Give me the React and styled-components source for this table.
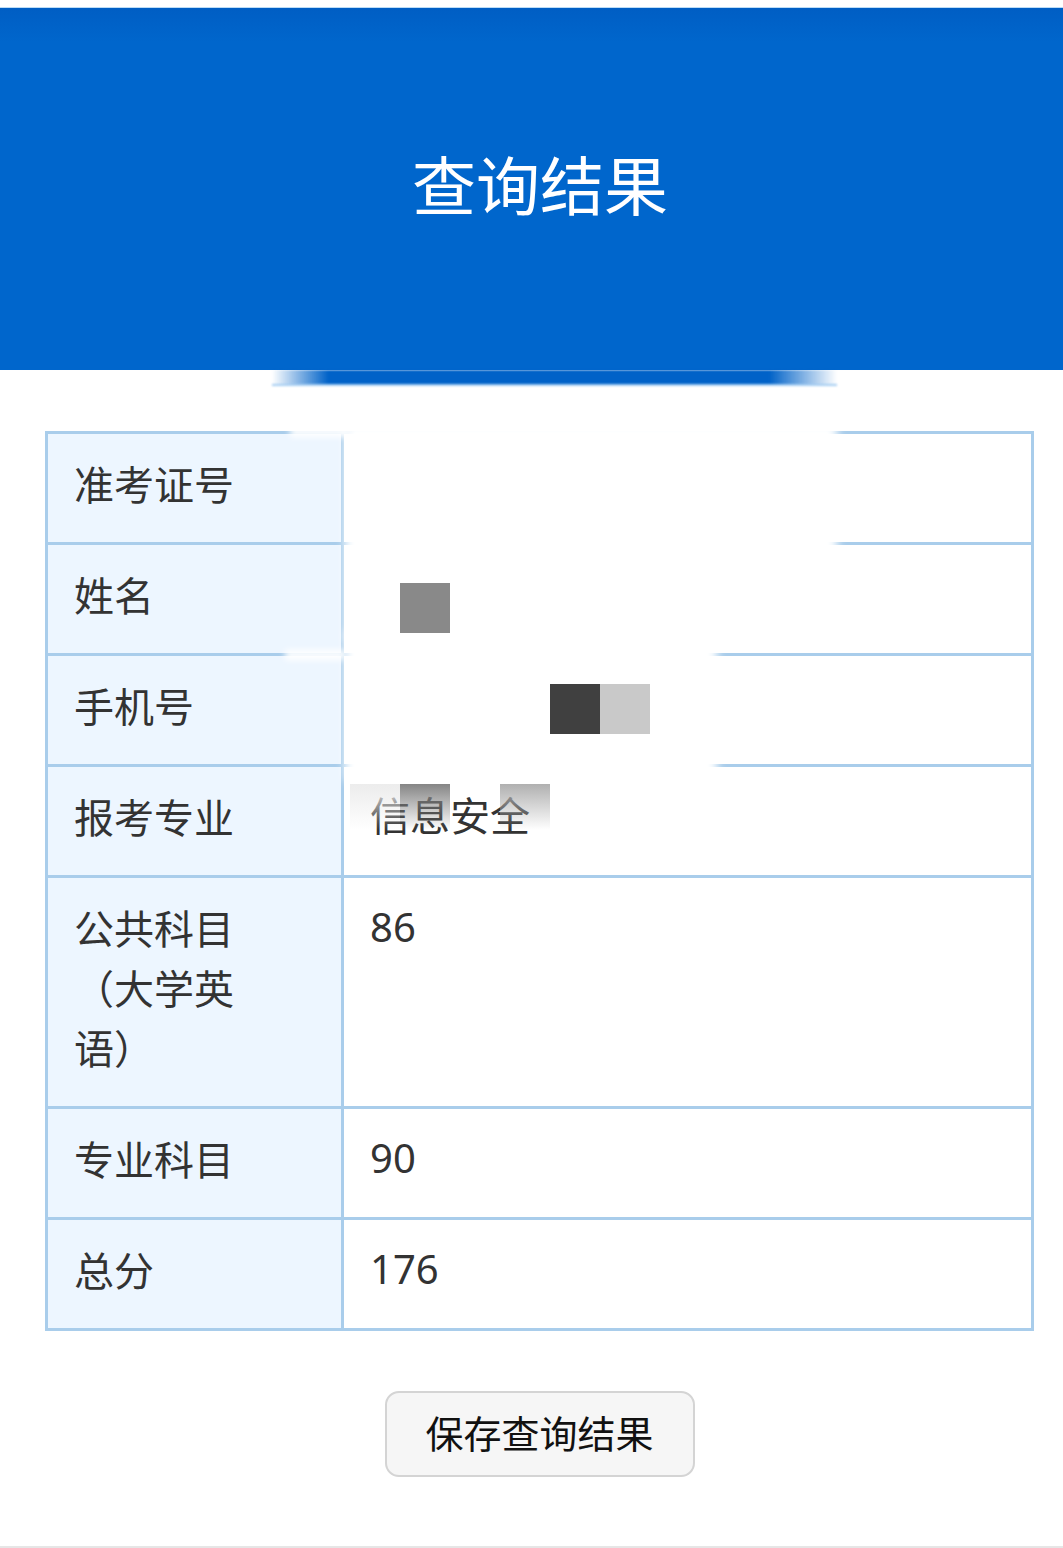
import React from "react";
import styled, { createGlobalStyle } from "styled-components";

const GlobalStyle = createGlobalStyle`
  body {
    margin: 0;
    background: #fff;
    font-family: "Noto Sans CJK SC", "Noto Sans", sans-serif;
    overflow: hidden;
  }
`;

const Page = styled.div`
  box-sizing: border-box;
  height: 1548px;
  padding-top: 7px;
  border-bottom: 2px solid #e6e6e6;
  display: flex;
  flex-direction: column;
`;

const Header = styled.header`
  position: relative;
  box-sizing: border-box;
  height: 363px;
  padding: 0 0 14px 17px;
  display: flex;
  align-items: center;
  justify-content: center;
  border-top: 1px solid #bcdcf6;
  background: linear-gradient(#005ec4 0, #0066cc 34px, #0066cc 100%);
`;

const Title = styled.h1`
  margin: 0;
  color: #fff;
  font-size: 64px;
  font-weight: 400;
`;

/* smudge left under the header by the blur tool */
const HeaderSmear = styled.div`
  position: absolute;
  left: 272px;
  top: 100%;
  width: 565px;
  height: 14px;
  background: linear-gradient(
    90deg,
    rgba(0, 98, 200, 0) 0%,
    #0062c8 10%,
    #0062c8 88%,
    rgba(0, 98, 200, 0) 100%
  );
  border-bottom: 2px solid #a6cef2;
  filter: blur(1px);
`;

const Content = styled.main`
  padding: 61px 29px 0 45px;
  display: flex;
  flex-direction: column;
  align-items: center;
`;

const TableWrap = styled.div`
  position: relative;
  align-self: stretch;
`;

const Table = styled.div`
  display: grid;
  grid-template-columns: 293px 1fr;
  gap: 3px;
  border: 3px solid #a9cdeb;
  background: #a9cdeb;
`;

const Label = styled.div`
  padding: 19px 90px 29px 26px;
  background: #edf6ff;
  color: #333;
  font-size: 40px;
  line-height: 60px;
`;

const Value = styled.div`
  padding: 19px 26px 29px;
  background: #fff;
  color: #333;
  font-size: 40px;
  line-height: 60px;
  font-family: "Noto Sans", "Noto Sans CJK SC", sans-serif;
`;

const Mask = styled.div`
  position: absolute;
  background: #fff;
  filter: blur(${({ $blur }) => $blur || 5}px);
`;

const Pixel = styled.div`
  position: absolute;
  width: 50px;
  height: ${({ $h }) => $h || 50}px;
  background: ${({ $fade, $c }) =>
    $fade ? `linear-gradient(${$c}, rgba(255,255,255,0))` : $c};
`;

const SaveButton = styled.button`
  margin-top: 60px;
  width: 310px;
  height: 86px;
  padding: 0 0 6px;
  border: 2px solid #d4d4d4;
  border-radius: 14px;
  background: #f6f6f6;
  color: #111;
  font-family: "Noto Sans CJK SC", sans-serif;
  font-size: 38px;
  cursor: pointer;
`;

const rows = [
  ["准考证号", ""],
  ["姓名", ""],
  ["手机号", ""],
  ["报考专业", "信息安全"],
  ["公共科目（大学英语）", "86"],
  ["专业科目", "90"],
  ["总分", "176"],
];

// redaction over the personal fields, relative to the table box
const masks = [
  { left: 300, top: -8, width: 492, height: 218 },
  { left: 300, top: 200, width: 372, height: 150 },
  { left: 245, top: -4, width: 60, height: 10, blur: 3 },
  { left: 240, top: 219, width: 60, height: 10, blur: 3 },
];

const pixels = [
  { left: 355, top: 152, c: "#898989" },
  { left: 505, top: 253, c: "#404040" },
  { left: 555, top: 253, c: "#c9c9c9" },
  { left: 305, top: 353, c: "#ececec", h: 46, fade: true },
  { left: 355, top: 353, c: "#858585", h: 46, fade: true },
  { left: 455, top: 353, c: "#b0b0b0", h: 46, fade: true },
];

const App = () => {
  return (
    <Page>
      <GlobalStyle />
      <Header>
        <Title>查询结果</Title>
        <HeaderSmear />
      </Header>
      <Content>
        <TableWrap>
          <Table>
            {rows.map(([label, value]) => (
              <React.Fragment key={label}>
                <Label>{label}</Label>
                <Value>{value}</Value>
              </React.Fragment>
            ))}
          </Table>
          {masks.map((m, i) => (
            <Mask
              key={i}
              $blur={m.blur}
              style={{ left: m.left, top: m.top, width: m.width, height: m.height }}
            />
          ))}
          {pixels.map((p, i) => (
            <Pixel
              key={i}
              $c={p.c}
              $h={p.h}
              $fade={p.fade}
              style={{ left: p.left, top: p.top }}
            />
          ))}
        </TableWrap>
        <SaveButton>保存查询结果</SaveButton>
      </Content>
    </Page>
  );
};

export default App;
